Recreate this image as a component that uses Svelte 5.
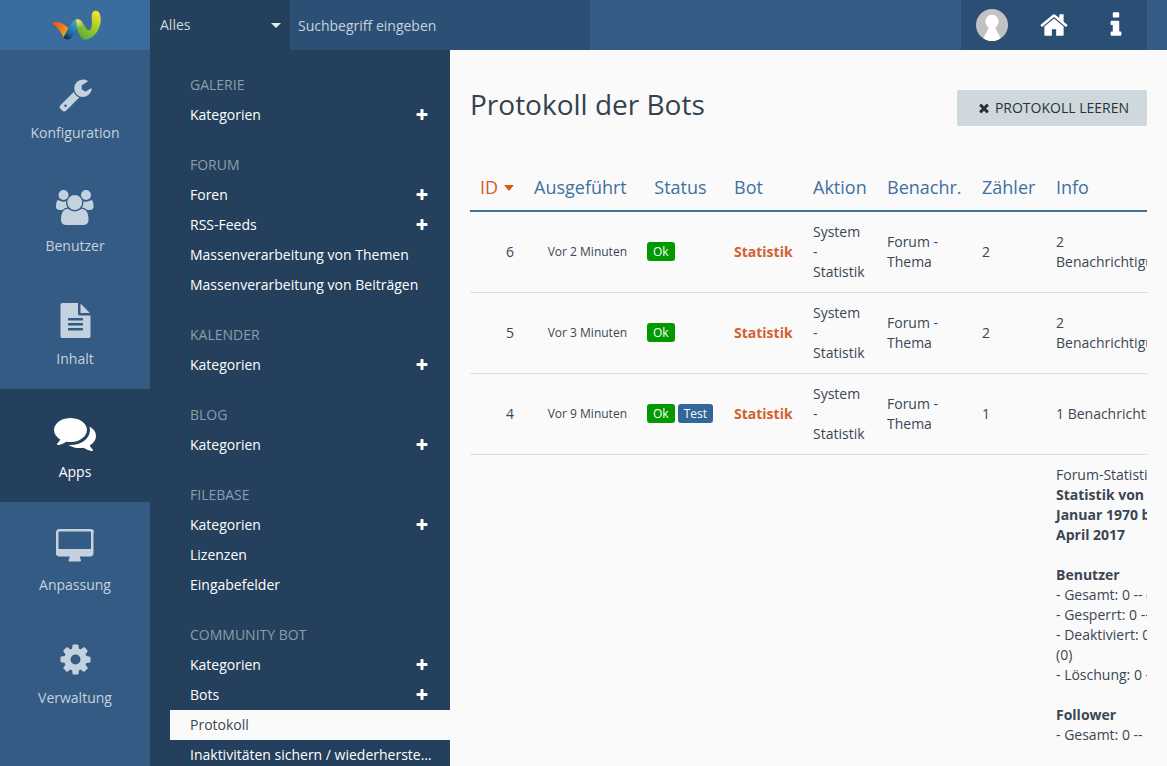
<script>
  const icons = {
    wrench: { box: "0 0 1792 1792", d: "M448 1472q0-26-19-45t-45-19-45 19-19 45 19 45 45 19 45-19 19-45zm644-420l-682 682q-37 37-90 37-52 0-91-37l-106-108q-38-36-38-90 0-53 38-91l681-681q39 98 114.5 173.5t173.5 114.5zm634-435q0 39-23 106-47 134-164.5 217.5t-258.5 83.5q-185 0-316.5-131.5t-131.5-316.5 131.5-316.5 316.5-131.5q58 0 121.5 16.5t107.5 46.5q16 11 16 28t-16 28l-293 169v224l193 107q5-3 79-48.5t135.5-81 70.5-35.5q15 0 23.5 10t8.5 25z" },
    users: { box: "0 0 1920 1792", d: "M593 896q-162 5-265 128h-134q-82 0-138-40.5t-56-118.5q0-353 124-353 6 0 43.5 21t97.5 42.5 119 21.5q67 0 133-23-5 37-5 66 0 139 81 256zm1071 637q0 120-73 189.5t-194 69.5h-874q-121 0-194-69.5t-73-189.5q0-53 3.5-103.5t14-109 26.5-108.5 43-97.5 62-81 85.5-53.5 111.5-20q10 0 43 21.5t73 48 107 48 135 21.5 135-21.5 107-48 73-48 43-21.5q61 0 111.5 20t85.5 53.5 62 81 43 97.5 26.5 108.5 14 109 3.5 103.5zm-1024-1277q0 106-75 181t-181 75-181-75-75-181 75-181 181-75 181 75 75 181zm704 384q0 159-112.5 271.5t-271.5 112.5-271.5-112.5-112.5-271.5 112.5-271.5 271.5-112.5 271.5 112.5 112.5 271.5zm576 225q0 78-56 118.5t-138 40.5h-134q-103-123-265-128 81-117 81-256 0-29-5-66 66 23 133 23 59 0 119-21.5t97.5-42.5 43.5-21q124 0 124 353zm-128-609q0 106-75 181t-181 75-181-75-75-181 75-181 181-75 181 75 75 181z" },
    file: { box: "0 0 1792 1792", d: "M1596 476q14 14 28 36h-472v-472q22 14 36 28zm-476 164h544v1056q0 40-28 68t-68 28h-1344q-40 0-68-28t-28-68v-1600q0-40 28-68t68-28h800v544q0 40 28 68t68 28zm160 736v-64q0-14-9-23t-23-9h-704q-14 0-23 9t-9 23v64q0 14 9 23t23 9h704q14 0 23-9t9-23zm0-256v-64q0-14-9-23t-23-9h-704q-14 0-23 9t-9 23v64q0 14 9 23t23 9h704q14 0 23-9t9-23zm0-256v-64q0-14-9-23t-23-9h-704q-14 0-23 9t-9 23v64q0 14 9 23t23 9h704q14 0 23-9t9-23z" },
    comments: { box: "0 0 1792 1792", d: "M1408 768q0 139-94 257t-256.5 186.5-353.5 68.5q-86 0-176-16-124 88-278 128-36 9-86 16h-3q-11 0-20.5-8t-11.5-21q-1-3-1-6.5t.5-6.5 2-6l2.5-5 3.5-5.5 4-5 4.5-5 4-4.5q5-6 23-25t26-29.5 22.5-29 25-38.5 20.5-44q-124-72-195-177t-71-224q0-139 94-257t256.5-186.5 353.5-68.5 353.5 68.5 256.5 186.5 94 257zm384 256q0 120-71 224.5t-195 176.5q10 24 20.5 44t25 38.5 22.5 29 26 29.5 23 25q1 1 4 4.5t4.5 5 4 5 3.5 5.5l2.5 5 2 6 .5 6.5-1 6.5q-3 14-13 22t-22 7q-50-7-86-16-154-40-278-128-90 16-176 16-271 0-472-132 58 4 88 4 161 0 309-45t264-129q125-92 192-212t67-254q0-77-23-152 129 71 204 178t75 230z" },
    desktop: { box: "0 0 1920 1792", d: "M1792 992v-832q0-13-9.5-22.5t-22.5-9.5h-1600q-13 0-22.5 9.5t-9.5 22.5v832q0 13 9.5 22.5t22.5 9.5h1600q13 0 22.5-9.5t9.5-22.5zm128-832v1088q0 66-47 113t-113 47h-544q0 37 16 77.5t32 71 16 43.5q0 26-19 45t-45 19h-512q-26 0-45-19t-19-45q0-14 16-44t32-70 16-78h-544q-66 0-113-47t-47-113v-1088q0-66 47-113t113-47h1632q66 0 113 47t47 113z" },
    cog: { box: "0 0 1792 1792", d: "M1152 896q0-106-75-181t-181-75-181 75-75 181 75 181 181 75 181-75 75-181zm512-109v222q0 12-8 23t-20 13l-185 28q-19 54-39 91 35 50 107 138 10 12 10 25t-9 23q-27 37-99 108t-94 71q-12 0-26-9l-138-108q-44 23-91 38-16 136-29 186-7 28-36 28h-222q-14 0-24.5-8.5t-11.5-21.5l-28-184q-49-16-90-37l-141 107q-10 9-25 9-14 0-25-11-126-114-165-168-7-10-7-23 0-12 8-23 15-21 51-66.5t54-70.5q-27-50-41-99l-183-27q-13-2-21-12.5t-8-23.5v-222q0-12 8-23t19-13l186-28q14-46 39-92-40-57-107-138-10-12-10-24 0-10 9-23 26-36 98.5-107.5t94.5-71.5q13 0 26 10l138 107q44-23 91-38 16-136 29-186 7-28 36-28h222q14 0 24.5 8.5t11.5 21.5l28 184q49 16 90 37l142-107q9-9 24-9 13 0 25 10 129 119 165 170 7 8 7 22 0 12-8 23-15 21-51 66.5t-54 70.5q26 50 41 98l183 28q13 2 21 12.5t8 23.5z" },
    home: { box: "0 0 1792 1792", d: "M1472 992v480q0 26-19 45t-45 19h-384v-384h-256v384h-384q-26 0-45-19t-19-45v-480q0-1 .5-3t.5-3l575-474 575 474q1 2 1 6zm223-69l-62 74q-8 9-21 11h-3q-13 0-21-7l-692-577-692 577q-12 8-24 7-13-2-21-11l-62-74q-8-10-7-23.5t11-21.5l719-599q32-26 76-26t76 26l244 204v-195q0-14 9-23t23-9h192q14 0 23 9t9 23v408l219 182q10 8 11 21.5t-7 23.5z" },
    info: { box: "0 0 1792 1792", d: "M1216 1344v128q0 26-19 45t-45 19h-512q-26 0-45-19t-19-45v-128q0-26 19-45t45-19h64v-384h-64q-26 0-45-19t-19-45v-128q0-26 19-45t45-19h384q26 0 45 19t19 45v576h64q26 0 45 19t19 45zm-128-1152v192q0 26-19 45t-45 19h-256q-26 0-45-19t-19-45v-192q0-26 19-45t45-19h256q26 0 45 19t19 45z" },
    times: { box: "0 0 1792 1792", d: "M1490 1322q0 40-28 68l-136 136q-28 28-68 28t-68-28l-294-294-294 294q-28 28-68 28t-68-28l-136-136q-28-28-28-68t28-68l294-294-294-294q-28-28-28-68t28-68l136-136q28-28 68-28t68 28l294 294 294-294q28-28 68-28t68 28l136 136q28 28 28 68t-28 68l-294 294 294 294q28 28 28 68z" },
    plus: { box: "0 0 1792 1792", d: "M1600 736v192q0 40-28 68t-68 28h-416v416q0 40-28 68t-68 28h-192q-40 0-68-28t-28-68v-416h-416q-40 0-68-28t-28-68v-192q0-40 28-68t68-28h416v-416q0-40 28-68t68-28h192q40 0 68 28t28 68v416h416q40 0 68 28t28 68z" },
  };

  const rail = [
    { label: "Konfiguration", icon: "wrench", h: 35 },
    { label: "Benutzer", icon: "users", h: 35 },
    { label: "Inhalt", icon: "file", h: 35 },
    { label: "Apps", icon: "comments", h: 42, active: true },
    { label: "Anpassung", icon: "desktop", h: 35 },
    { label: "Verwaltung", icon: "cog", h: 35 },
  ];

  const sections = [
    { title: "Galerie", items: [{ t: "Kategorien", plus: true }] },
    {
      title: "Forum",
      items: [
        { t: "Foren", plus: true },
        { t: "RSS-Feeds", plus: true },
        { t: "Massenverarbeitung von Themen" },
        { t: "Massenverarbeitung von Beiträgen" },
      ],
    },
    { title: "Kalender", items: [{ t: "Kategorien", plus: true }] },
    { title: "Blog", items: [{ t: "Kategorien", plus: true }] },
    {
      title: "Filebase",
      items: [{ t: "Kategorien", plus: true }, { t: "Lizenzen" }, { t: "Eingabefelder" }],
    },
    {
      title: "Community Bot",
      items: [
        { t: "Kategorien", plus: true },
        { t: "Bots", plus: true },
        { t: "Protokoll", active: true },
        { t: "Inaktivitäten sichern / wiederherstellen" },
      ],
    },
  ];

  const columns = ["Ausgeführt", "Status", "Bot", "Aktion", "Benachr.", "Zähler", "Info"];

  const rows = [
    { id: 6, time: "Vor 2 Minuten", count: 2, info: "2<br>Benachrichtigungen" },
    { id: 5, time: "Vor 3 Minuten", count: 2, info: "2<br>Benachrichtigungen" },
    { id: 4, time: "Vor 9 Minuten", count: 1, info: "1 Benachrichtigung", test: true },
  ];
</script>

{#snippet icon(name, size)}
  <svg class="icon" viewBox={icons[name].box} height={size} fill="currentColor" aria-hidden="true">
    <path d={icons[name].d} />
  </svg>
{/snippet}

<div class="page">
  <header class="topbar">
    <div class="logo">
      <svg width="52" height="30" viewBox="0 0 52 30" aria-hidden="true">
        <defs>
          <linearGradient id="tail" gradientUnits="userSpaceOnUse" x1="3" y1="13" x2="19" y2="22">
            <stop offset="0" stop-color="#e2521c" />
            <stop offset="0.6" stop-color="#ee7c1c" />
            <stop offset="1" stop-color="#f6a41e" />
          </linearGradient>
          <linearGradient id="rise" gradientUnits="userSpaceOnUse" x1="16" y1="29" x2="27" y2="10">
            <stop offset="0" stop-color="#10263e" />
            <stop offset="0.35" stop-color="#1a6aa6" />
            <stop offset="1" stop-color="#4fa8c8" />
          </linearGradient>
          <linearGradient id="fall" gradientUnits="userSpaceOnUse" x1="30" y1="26" x2="49" y2="2">
            <stop offset="0" stop-color="#5aaa40" />
            <stop offset="0.5" stop-color="#9fca24" />
            <stop offset="1" stop-color="#f5e82e" />
          </linearGradient>
          <radialGradient id="peak" gradientUnits="userSpaceOnUse" cx="29" cy="11" r="7">
            <stop offset="0" stop-color="#ece67a" />
            <stop offset="1" stop-color="#ece67a" stop-opacity="0" />
          </radialGradient>
        </defs>
        <path d="M2.700 12.700 C7 11 14 12 19.300 18.300 L15 28 C13 24 9 17 2.700 12.700 Z" fill="url(#tail)" />
        <path d="M19.300 18.300 C21.500 14 24 10.500 27 9.300 L28 18.500 C26 23 24 27 21 29 C19 30 16.500 29.500 14.500 27.500 Z" fill="url(#rise)" />
        <path id="wave-right" d="M27 9.300 C31 8.500 33 11 35 15 C37 19 39 21 41 20 C43 18.500 43 13 42.700 8 C42.500 3 44 0.700 46.500 0.700 C50 0.700 51.500 4 51.700 9 C52 17 47 27 38 29.500 C33 30.500 31 27 28 18.500 Z" fill="url(#fall)" />
        <path d="M27 9.300 C31 8.500 33 11 35 15 L30 23 L28 18.500 Z" fill="url(#peak)" />
      </svg>
    </div>
    <div class="search">
      <div class="scope">
        <span>Alles</span>
        <i class="caret"></i>
      </div>
      <input class="query" placeholder="Suchbegriff eingeben" />
    </div>
    <div class="user-nav">
      <a class="nav-link">
        <svg class="avatar" width="32" height="32" viewBox="0 0 32 32" aria-hidden="true">
          <defs>
            <clipPath id="round"><circle cx="16" cy="16" r="16" /></clipPath>
          </defs>
          <circle cx="16" cy="16" r="16" fill="#c2c2c2" />
          <g clip-path="url(#round)" fill="#fff">
            <ellipse cx="16" cy="12.500" rx="6.500" ry="7" />
            <path d="M13 17 L19 17 C20 23 24 25 25 32 L7 32 C8 25 12 23 13 17 Z" />
          </g>
        </svg>
      </a>
      <a class="nav-link">{@render icon("home", 30)}</a>
      <a class="nav-link">{@render icon("info", 30)}</a>
    </div>
  </header>

  <div class="body">
    <nav class="rail">
      {#each rail as item}
        <a class="rail-item" class:active={item.active}>
          <span class="rail-icon">{@render icon(item.icon, item.h)}</span>
          <span class="rail-label">{item.label}</span>
        </a>
      {/each}
    </nav>

    <aside class="sidebar">
      {#each sections as section}
        <section class="menu">
          <h2>{section.title}</h2>
          <ul>
            {#each section.items as item}
              <li class:active={item.active}>
                <span class="menu-text">{item.t}</span>
                {#if item.plus}
                  <span class="plus">{@render icon("plus", 14)}</span>
                {/if}
              </li>
            {/each}
          </ul>
        </section>
      {/each}
    </aside>

    <main class="content">
      <div class="content-head">
        <h1>Protokoll der Bots</h1>
        <button class="clear">{@render icon("times", 14)}<span>Protokoll leeren</span></button>
      </div>

      <div class="table-wrap">
        <table>
          <colgroup>
            <col style="width:54px" />
            <col style="width:113px" />
            <col style="width:87px" />
            <col style="width:79px" />
            <col style="width:74px" />
            <col style="width:95px" />
            <col style="width:74px" />
            <col style="width:224px" />
          </colgroup>
          <thead>
            <tr>
              <th class="sorted">ID <i class="sort-caret"></i></th>
              {#each columns as col}
                <th class:center={col === "Status"}>{col}</th>
              {/each}
            </tr>
          </thead>
          <tbody>
            {#each rows as row}
              <tr>
                <td class="num">{row.id}</td>
                <td class="time">{row.time}</td>
                <td class="status">
                  <span class="badge ok">Ok</span>
                  {#if row.test}<span class="badge test">Test</span>{/if}
                </td>
                <td class="bot">Statistik</td>
                <td>System - Statistik</td>
                <td>Forum - Thema</td>
                <td>{row.count}</td>
                <td class="info">{@html row.info}</td>
              </tr>
            {/each}
            <tr class="detail">
              <td colspan="7"></td>
              <td class="info">
                Forum-Statistik<br />
                <b>Statistik von 1.<br />Januar 1970 bis 12.<br />April 2017</b><br /><br />
                <b>Benutzer</b><br />
                - Gesamt: 0 -- (0)<br />
                - Gesperrt: 0 -- (0)<br />
                - Deaktiviert: 0 --<br />
                (0)<br />
                - Löschung: 0 -- (0)<br /><br />
                <b>Follower</b><br />
                - Gesamt: 0 --
              </td>
            </tr>
          </tbody>
        </table>
      </div>
    </main>
  </div>
</div>

<style>
  :global(html),
  :global(body) {
    margin: 0;
    height: 100%;
    overflow: hidden;
  }

  .page {
    display: flex;
    flex-direction: column;
    height: 766px;
    overflow: hidden;
    font-family: "Open Sans", "Liberation Sans", sans-serif;
    font-size: 14px;
    line-height: 20px;
    color: #3a4652;
    background: #fafafa;
  }

  .icon {
    display: block;
  }

  /* Kopfzeile */
  .topbar {
    display: flex;
    flex: none;
    height: 50px;
    background: #345c85;
  }

  .logo {
    display: flex;
    flex: none;
    align-items: center;
    justify-content: center;
    width: 150px;
    background: #3a6c9e;
  }

  .search {
    display: flex;
  }

  .scope {
    display: flex;
    align-items: center;
    justify-content: space-between;
    box-sizing: border-box;
    width: 140px;
    padding: 0 9px 0 10px;
    background: #24405c;
    color: #cfd8dc;
  }

  .caret {
    width: 0;
    height: 0;
    border-left: 5px solid transparent;
    border-right: 5px solid transparent;
    border-top: 5px solid #e4e9ee;
  }

  .query {
    box-sizing: border-box;
    width: 300px;
    height: 50px;
    padding: 0 8px;
    border: 0;
    outline: 0;
    background: #2c5075;
    font: inherit;
    color: #cfd8dc;
  }

  .query::placeholder {
    color: #c6d2dd;
    opacity: 1;
  }

  .user-nav {
    display: flex;
    margin-left: auto;
    margin-right: 20px;
    background: #2b4f74;
  }

  .nav-link {
    display: flex;
    align-items: center;
    justify-content: center;
    width: 62px;
    color: #fff;
  }

  /* Linke Leiste */
  .body {
    display: flex;
    flex: 1;
    min-height: 0;
  }

  .rail {
    flex: none;
    width: 150px;
    background: #345b83;
  }

  .rail-item {
    display: flex;
    flex-direction: column;
    align-items: center;
    box-sizing: border-box;
    height: 113px;
    padding-top: 23px;
    color: #c4d2df;
  }

  .rail-item.active {
    background: #24405c;
    color: #fff;
  }

  .rail-icon {
    display: flex;
    align-items: center;
    justify-content: center;
    height: 42px;
    margin-bottom: 8px;
  }

  .rail-label {
    line-height: 20px;
  }

  .sidebar {
    flex: none;
    box-sizing: border-box;
    width: 300px;
    padding: 20px 0 0 20px;
    background: #24405c;
    color: #fff;
  }

  .menu {
    margin-bottom: 20px;
  }

  .menu h2 {
    margin: 0;
    padding-left: 20px;
    font-size: 14px;
    font-weight: 400;
    line-height: 30px;
    text-transform: uppercase;
    color: #8a9dae;
  }

  .menu ul {
    margin: 0;
    padding: 0;
    list-style: none;
  }

  .menu li {
    display: flex;
    align-items: center;
    height: 30px;
    padding: 0 18px 0 20px;
  }

  .menu li.active {
    background: #fafafa;
    color: #3a4652;
  }

  .menu-text {
    overflow: hidden;
    white-space: nowrap;
    text-overflow: ellipsis;
  }

  .plus {
    margin-left: auto;
    margin-right: 3px;
  }

  /* Inhalt */
  .content {
    flex: 1;
    min-width: 0;
    padding: 40px 20px 0;
  }

  .content-head {
    display: flex;
    align-items: flex-start;
    justify-content: space-between;
    margin-bottom: 40px;
  }

  h1 {
    margin: 0;
    font-size: 28px;
    font-weight: 400;
    line-height: 28px;
    color: #34424f;
  }

  .clear {
    display: flex;
    align-items: center;
    gap: 4px;
    height: 36px;
    padding: 0 18px 0 20px;
    border: 0;
    border-radius: 2px;
    background: #cfd8dc;
    font: inherit;
    text-transform: uppercase;
    color: #263238;
  }

  .table-wrap {
    overflow: hidden;
  }

  table {
    table-layout: fixed;
    width: 800px;
    border-collapse: collapse;
  }

  th {
    padding: 9px 10px 11px;
    border-bottom: 2px solid #3f70a0;
    font-size: 18px;
    font-weight: 400;
    line-height: 24px;
    text-align: left;
    white-space: nowrap;
    color: #3f70a0;
  }

  th.center {
    text-align: center;
  }

  th.sorted {
    color: #d35a1c;
  }

  .sort-caret {
    display: inline-block;
    width: 0;
    height: 0;
    margin-left: 1px;
    vertical-align: 3px;
    border-left: 5.500px solid transparent;
    border-right: 5.500px solid transparent;
    border-top: 6px solid #d35a1c;
  }

  td {
    padding: 10px;
    border-bottom: 1px solid #dedede;
    vertical-align: middle;
  }

  tr.detail td {
    border-bottom: 0;
  }

  .num,
  .time {
    text-align: right;
  }

  .time {
    font-size: 12px;
  }

  .status {
    white-space: nowrap;
    font-size: 0;
    line-height: 19px;
  }

  .badge {
    display: inline-block;
    height: 19px;
    padding: 0 6px;
    border-radius: 3px;
    font-size: 12px;
    line-height: 19px;
    color: #fff;
    vertical-align: middle;
  }

  .badge.ok {
    background: #009900;
  }

  .badge.test {
    margin-left: 3px;
    background: #336699;
  }

  .bot {
    font-weight: 700;
    color: #d3602f;
  }

  .info {
    white-space: nowrap;
  }
</style>
